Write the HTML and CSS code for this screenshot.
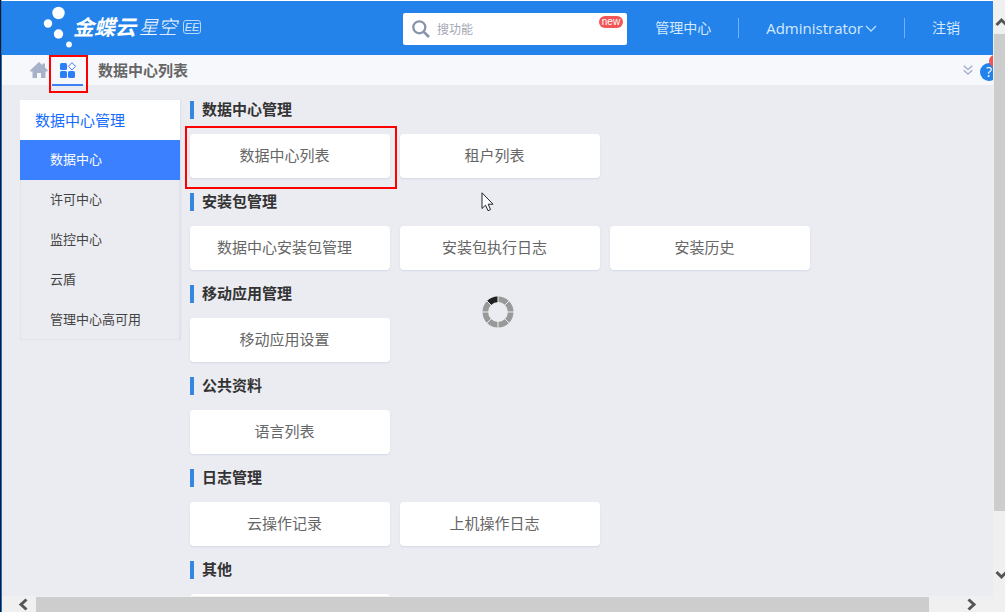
FILE: index.html
```
<!DOCTYPE html>
<html lang="zh-CN">
<head>
<meta charset="utf-8">
<title>数据中心列表</title>
<link rel="stylesheet" href="styles.css">
</head>
<body>
<div class="viewport">
  <div class="page">
    <header class="header">
      <a class="logo" href="#">
        <svg class="logo-dots" width="30" height="42" viewBox="0 0 30 42" fill="#fff" aria-hidden="true"><circle cx="15.500" cy="7" r="6.200"/><circle cx="5" cy="17.500" r="4.200"/><circle cx="15.500" cy="28" r="4.700"/><circle cx="26" cy="38.500" r="2.900"/></svg>
        <span class="logo-brand">金蝶云</span>
        <span class="logo-product">星空</span>
        <span class="logo-edition">EE</span>
      </a>
      <div class="search">
        <svg width="18" height="18" viewBox="0 0 18 18" fill="none" stroke="#8793ab" aria-hidden="true"><circle cx="7.300" cy="7.300" r="6" stroke-width="2.300"/><path d="M11.800 11.800 17 17" stroke-width="2.600"/></svg>
        <input class="search-input" type="text" placeholder="搜功能" aria-label="搜功能">
        <span class="search-badge">new</span>
      </div>
      <nav class="top-nav">
        <a class="top-link" href="#">管理中心</a>
        <a class="top-link top-user" href="#">Administrator<svg width="12" height="8" viewBox="0 0 12 8" fill="none" stroke="#b9dcff" stroke-width="1.300" aria-hidden="true"><path d="M1 2 6 7 11 2"/></svg></a>
        <a class="top-link" href="#">注销</a>
      </nav>
    </header>

    <div class="tabs">
      <button class="tab-home" type="button" aria-label="首页"><svg width="18" height="17" viewBox="0 0 18 17" fill="#a7b1c9" aria-hidden="true"><path d="M9 0 12.500 3.200V1.500H15V5.500L18 8.500 17 9.500H15.500V16H11V11H7V16H2.500V9.500H0V8.500Z"/></svg></button>
      <button class="tab-apps" type="button" aria-label="应用"><svg width="17" height="16" viewBox="0 0 17 16" aria-hidden="true"><defs><linearGradient id="tile" x1="0" y1="0" x2="1" y2="1"><stop offset="0" stop-color="#1d86f0"/><stop offset="1" stop-color="#3b76ff"/></linearGradient></defs><g fill="url(#tile)"><rect x="0" y="1" width="7" height="7" rx="1.500"/><rect x="0" y="9" width="7" height="7" rx="1.500"/><rect x="8" y="9" width="7" height="7" rx="1.500"/></g><path d="M12 .7 15.600 4.300 12 7.900 8.400 4.300Z" fill="#fff" stroke="#3b7cff"/></svg></button>
      <h1 class="tab-title">数据中心列表</h1>
      <button class="tab-more" type="button" aria-label="展开"><svg width="10" height="10" viewBox="0 0 10 10" fill="none" stroke="#a7b1cf" stroke-width="1.500" aria-hidden="true"><path d="M.7.800 5 4.500 9.300.800M.7 5.300 5 9 9.300 5.300"/></svg></button>
      <button class="tab-help" type="button" aria-label="帮助"><span class="help-mark">?</span><span class="help-dot"></span></button>
    </div>

    <div class="body">
      <aside class="sidebar">
        <h2 class="side-title">数据中心管理</h2>
        <a class="side-item side-active" href="#">数据中心</a>
        <a class="side-item" href="#">许可中心</a>
        <a class="side-item" href="#">监控中心</a>
        <a class="side-item" href="#">云盾</a>
        <a class="side-item" href="#">管理中心高可用</a>
      </aside>
      <main class="main">
        <section class="group"><h2 class="group-title">数据中心管理</h2>
          <div class="cards"><button class="card card-marked" type="button">数据中心列表</button><button class="card" type="button">租户列表</button></div></section>
        <section class="group"><h2 class="group-title">安装包管理</h2>
          <div class="cards"><button class="card" type="button">数据中心安装包管理</button><button class="card" type="button">安装包执行日志</button><button class="card" type="button">安装历史</button></div></section>
        <section class="group"><h2 class="group-title">移动应用管理</h2>
          <div class="cards"><button class="card" type="button">移动应用设置</button></div></section>
        <section class="group"><h2 class="group-title">公共资料</h2>
          <div class="cards"><button class="card" type="button">语言列表</button></div></section>
        <section class="group"><h2 class="group-title">日志管理</h2>
          <div class="cards"><button class="card" type="button">云操作记录</button><button class="card" type="button">上机操作日志</button></div></section>
        <section class="group"><h2 class="group-title">其他</h2>
          <div class="cards"><button class="card" type="button" aria-label="其他"></button></div></section>
      </main>
    </div>
    <svg class="spinner" width="32" height="32" viewBox="0 0 32 32" fill="none" stroke-width="5.600" aria-hidden="true"><circle cx="16" cy="16" r="12.700" stroke="#999"/><path d="M7.020 7.020A12.700 12.700 0 0 1 16 3.300" stroke="#222"/><path d="M16 0V32M0 16H32M4.700 4.700 27.300 27.300M27.300 4.700 4.700 27.300" stroke="#ebecf1" stroke-width="1"/></svg>
    <svg class="pointer" width="13" height="20" viewBox="0 0 13 20" aria-hidden="true"><path d="M1 .8V16.500L4.500 13.200 7 18.700 9.500 17.600 7.200 12.200H12Z" fill="#fff" stroke="#20242c" stroke-width="1"/></svg>
  </div>

  <div class="scroll-y" aria-hidden="true">
    <svg class="arrow" width="12" height="34" viewBox="0 0 12 34" fill="none" stroke="#555" stroke-width="3"><path d="M2.500 25 7.500 20 12.500 25"/></svg>
    <div class="thumb-y"></div>
    <svg class="arrow" width="12" height="34" viewBox="0 0 12 34" fill="none" stroke="#555" stroke-width="3"><path d="M2.500 10 7.500 15 12.500 10"/></svg>
  </div>
  <div class="scroll-x" aria-hidden="true">
    <svg class="arrow" width="34" height="15" viewBox="0 0 34 15" fill="none" stroke="#555" stroke-width="3"><path d="M24.500 2.500 19 7.500 24.500 12.500"/></svg>
    <div class="thumb-x"></div>
    <svg class="arrow" width="34" height="15" viewBox="0 0 34 15" fill="none" stroke="#555" stroke-width="3"><path d="M5.500 2.500 11 7.500 5.500 12.500"/></svg>
  </div>
</div>
</body>
</html>
```

FILE: styles.css
```
* { box-sizing: border-box; }
body {
  margin: 0;
  font-family: "Open Sans", "Noto Sans CJK SC", sans-serif;
  color: #444;
}
button { border: 0; padding: 0; background: none; font: inherit; color: inherit; }
a { color: inherit; text-decoration: none; }
h1, h2 { margin: 0; }
svg { display: block; flex: none; }

.viewport {
  display: grid;
  grid-template-columns: minmax(0, 1fr) 12px;
  grid-template-rows: minmax(0, 1fr) 16px;
  height: 100vh;
  border-left: 1px solid #061830;
  overflow: hidden;
  background: #f0f0f0;
}
.page {
  position: relative;
  display: flex;
  flex-direction: column;
  min-height: 0;
  overflow: hidden;
  border-top: 1px solid #fff;
  border-left: 1px solid #1670cc;
  background: #ebecf1;
}

.header {
  display: flex;
  flex: none;
  align-items: center;
  height: 54px;
  background: #2483ea;
  color: #d3e9ff;
}
.logo {
  display: flex;
  flex: none;
  align-items: center;
  width: 401px;
  padding: 0 0 3px 41px;
  color: #fff;
}
.logo-brand { font-size: 21px; font-weight: 700; font-style: italic; line-height: 24px; }
.logo-product { margin-left: 3px; font-size: 19px; font-weight: 300; font-style: italic; line-height: 24px; }
.logo-edition {
  width: 18px;
  margin-left: 6px;
  border: 1px solid #b6d7fa;
  border-radius: 3px;
  font: italic 11px/12px "Liberation Sans", sans-serif;
  text-align: center;
  color: #d3e9ff;
}
.search {
  position: relative;
  display: flex;
  flex: none;
  align-items: center;
  width: 224px;
  height: 32px;
  margin-top: 2px;
  padding-left: 9px;
  border-radius: 2px;
  background: #fff;
}
.search-input {
  flex: 1;
  min-width: 0;
  margin-left: 7px;
  padding: 0 0 1px;
  border: 0;
  outline: 0;
  background: none;
  font: 12px/20px "Noto Sans CJK SC", sans-serif;
}
.search-input::placeholder { color: #a3a7b5; }
.search-badge {
  position: absolute;
  top: 3px;
  right: 4px;
  width: 24px;
  border-radius: 6px;
  background: #f25555;
  font: 10px/12px "Liberation Sans", sans-serif;
  text-align: center;
  color: #fff;
}
.top-nav {
  display: flex;
  flex: 1;
  align-items: center;
  justify-content: flex-end;
  padding-right: 6px;
}
.top-link { padding: 0 27px; font-size: 14px; line-height: 20px; white-space: nowrap; }
.top-link:first-child { padding-left: 24px; }
.top-link + .top-link { border-left: 1px solid #72b2f5; }
.top-user { display: flex; align-items: center; gap: 2px; font-size: 15px; }

.tabs {
  display: flex;
  flex: none;
  align-items: center;
  height: 30px;
  padding-left: 28px;
  background: #f6f8fc;
}
.tab-apps {
  position: relative;
  width: 31px;
  height: 30px;
  margin: 2px 0 0 4px;
  padding-left: 8px;
  border-bottom: 2px solid #3b80f5;
}
.tab-apps::after {
  content: "";
  position: absolute;
  inset: -1px -5px -9px -3px;
  border: 2px solid #f00;
}
.tab-title {
  margin-left: 15px;
  font-size: 15px;
  font-weight: 700;
  line-height: 20px;
  color: #666;
}
.tab-more { margin-left: auto; }
.tab-help {
  position: relative;
  width: 13px;
  height: 18px;
  margin-left: 7px;
  margin-top: 4px;
}
.help-mark {
  position: absolute;
  inset: 0 auto auto 0;
  width: 18px;
  border-radius: 9px;
  background: #2483ea;
  font-size: 14px;
  line-height: 18px;
  color: #fff;
}
.help-dot {
  position: absolute;
  top: -8px;
  left: 9px;
  width: 12px;
  height: 12px;
  border-radius: 6px;
  background: #f25555;
}

.body { display: flex; flex: 1; gap: 10px; min-height: 0; padding: 15px 18px 0; overflow: hidden; }
.sidebar {
  flex: none;
  align-self: flex-start;
  width: 160px;
  box-shadow: inset 0 0 2px #ccd0d8, 1px 0 1px #dde1ea;
}
.side-title {
  padding-left: 15px;
  background: #fff;
  font-size: 15px;
  font-weight: 400;
  line-height: 40px;
  color: #146cff;
}
.side-item { display: block; padding: 0 0 2px 30px; font-size: 13px; line-height: 38px; }
.side-active { background: #3b80ff; color: #fff; }

.main { flex: 1; min-width: 0; padding-top: 1px; }
.group { margin-bottom: 15px; }
.group-title {
  padding: 0 0 2px 8px;
  border-left: 4px solid #3687e0;
  font-size: 15px;
  font-weight: 700;
  line-height: 16px;
  color: #333;
}
.cards { display: flex; gap: 10px; margin-top: 15px; }
.card {
  position: relative;
  flex: 0 0 200px;
  height: 44px;
  padding: 0 11px 2px 0;
  border-radius: 4px;
  background: #fff;
  box-shadow: 0 1px 2px #d3d8e5;
  font-size: 15px;
  line-height: 20px;
  color: #666;
}
.card-marked::after {
  content: "";
  position: absolute;
  inset: -8px -7px -11px -5px;
  border: 2px solid #f00;
}
.spinner { position: absolute; top: 295px; left: 480px; }
.pointer { position: absolute; top: 191px; left: 479px; }

.scroll-y { display: flex; flex-direction: column; padding-left: 1px; overflow: hidden; background: #f0f0f0; }
.thumb-y { flex: 1; margin-bottom: 51px; background: #cdcdcd; }
.scroll-x { display: flex; grid-column: 1 / -1; padding: 1px 8px 0 0; border-left: 1px solid #1670cc; background: #f0f0f0; }
.thumb-x { flex: 1; margin-right: 34px; background: #cdcdcd; }
```
